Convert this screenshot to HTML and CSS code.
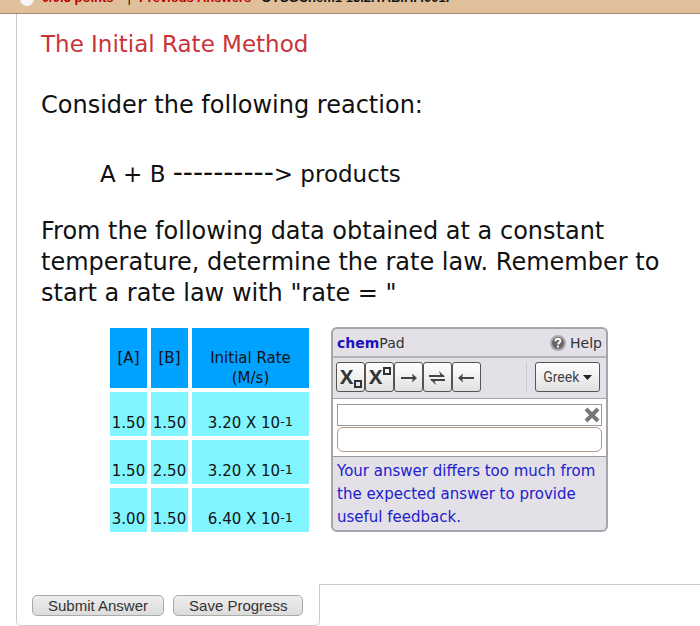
FILE: index.html
```html
<!DOCTYPE html>
<html lang="en">
<head>
  <meta charset="UTF-8" />
  <meta name="viewport" content="width=device-width, initial-scale=1.0"/>
  <title>The Initial Rate Method</title>
  <link rel="stylesheet" href="styles.css">
</head>
<body>

  <header class="question-bar">
    <span class="status-dot"></span>
    <span class="points">0/0.5 points</span>
    <span class="divider">|</span>
    <a class="previous" href="#">Previous Answers</a>
    <span class="code">OYSGChem1 15.2.TAB.HP.001.</span>
  </header>

  <main class="question">
    <h1>The Initial Rate Method</h1>
    <p class="intro">Consider the following reaction:</p>
    <p class="reaction">A + B <span class="dashes">----------</span>&gt; products</p>
    <p class="task">From the following data obtained at a constant temperature, determine the rate law. Remember to start a rate law with "rate = "</p>

    <div class="work">
      <table class="rates">
        <thead>
          <tr><th>[A]</th><th>[B]</th><th class="rate">Initial Rate (M/s)</th></tr>
        </thead>
        <tbody>
          <tr><td>1.50</td><td>1.50</td><td>3.20 X 10<sup>-1</sup></td></tr>
          <tr><td>1.50</td><td>2.50</td><td>3.20 X 10<sup>-1</sup></td></tr>
          <tr><td>3.00</td><td>1.50</td><td>6.40 X 10<sup>-1</sup></td></tr>
        </tbody>
      </table>

      <section class="chempad">
        <div class="pad-header">
          <span><b>chem</b>Pad</span>
          <a class="help" href="#">
            <svg width="16" height="16" viewBox="0 0 16 16">
              <circle cx="8" cy="8" r="7" fill="#666" stroke="#aaa" stroke-width="2"/>
              <path d="M5.5 6.2C5.5 3 10.6 3.2 10.4 6C10.3 7.7 8.1 7.5 8.1 9.4" fill="none" stroke="#fff" stroke-width="2"/>
              <rect x="7" y="10.6" width="2" height="2" fill="#fff"/>
            </svg>
            Help
          </a>
        </div>

        <div class="toolbar">
          <div class="tools">
            <button type="button" aria-label="Subscript">
              <svg width="27" height="28" viewBox="0 0 27 28">
                <text class="tool-letter" x="3" y="21">X</text>
                <rect x="18" y="18" width="6" height="6" fill="none" stroke="#333" stroke-width="2"/>
              </svg>
            </button>
            <button type="button" aria-label="Superscript">
              <svg width="27" height="28" viewBox="0 0 27 28">
                <text class="tool-letter" x="3" y="21">X</text>
                <rect x="18" y="5" width="6" height="6" fill="none" stroke="#333" stroke-width="2"/>
              </svg>
            </button>
            <button type="button" aria-label="Right arrow">
              <svg width="27" height="28" viewBox="0 0 27 28" fill="none" stroke="#444">
                <path d="M6 15H20" stroke-width="2"/>
                <path d="M17 10.5L22 15L17 19.5L18 15Z" fill="#444" stroke="none"/>
              </svg>
            </button>
            <button type="button" aria-label="Equilibrium arrows">
              <svg width="27" height="28" viewBox="0 0 27 28" fill="none" stroke="#444">
                <path d="M5 13H20M7 17H21" stroke-width="2"/>
                <path d="M15 8L21 14H17ZM12 22L6 16H10Z" fill="#444" stroke="none"/>
              </svg>
            </button>
            <button type="button" aria-label="Left arrow">
              <svg width="27" height="28" viewBox="0 0 27 28" fill="none" stroke="#444">
                <path d="M7 15H21" stroke-width="2"/>
                <path d="M10 10.5L5 15L10 19.5L9 15Z" fill="#444" stroke="none"/>
              </svg>
            </button>
          </div>
          <div class="greek">
            <button type="button">Greek
              <svg width="9" height="10" viewBox="0 0 9 10"><path d="M0 3H9L4.5 8Z" fill="#222"/></svg>
            </button>
          </div>
        </div>

        <div class="answer">
          <div class="answer-row">
            <input class="entry" type="text" aria-label="Answer">
            <svg class="wrong" width="16" height="16" viewBox="0 0 16 16">
              <path d="M2 2L14 14M14 2L2 14" stroke="#777" stroke-width="4"/>
            </svg>
          </div>
          <input class="preview" type="text" aria-label="Preview" readonly>
        </div>

        <p class="feedback">Your answer differs too much from the expected answer to provide useful feedback.</p>
      </section>
    </div>
  </main>

  <footer class="actions">
    <div class="action-tab">
      <button type="submit">Submit Answer</button>
      <button type="button">Save Progress</button>
    </div>
    <div class="action-rest"></div>
  </footer>

</body>
</html>
```
FILE: styles.css
```css
* {
  box-sizing: border-box;
}

body {
  margin: 0;
  background: #fff;
  color: #111;
  font-family: Verdana, 'DejaVu Sans', sans-serif;
}

.question-bar {
  display: flex;
  align-items: flex-end;
  height: 14px;
  padding: 0 20px 7px;
  background: #e0c09a;
  border-bottom: 1px solid #a58a6c;
  font: bold 13px/16px 'Liberation Sans', Arial, sans-serif;
  white-space: nowrap;
}

.status-dot {
  width: 14px;
  height: 14px;
  margin-right: 8px;
  border-radius: 50%;
  background: #f4f4f4;
}

.points,
.previous {
  color: #b00;
  text-decoration: none;
}

.divider {
  margin: 0 8px 0 14px;
  font-weight: normal;
}

.code {
  margin-left: 10px;
}

.question {
  margin-left: 16px;
  padding: 15px 24px 48px;
  border-left: 1px solid #ccc;
}

h1,
.question p {
  margin: 0;
  font-size: 24px;
  font-weight: normal;
  line-height: 31px;
}

h1 {
  color: #c9343a;
  font-size: 23px;
}

.question .intro {
  margin-top: 30px;
}

.question .reaction {
  margin: 38px 0 26px;
  padding-left: 59px;
  font-size: 23px;
}

.dashes {
  font-size: 28px;
  line-height: 1px;
}

.work {
  display: flex;
  align-items: flex-start;
  gap: 18px;
  margin-top: 15px;
  padding-left: 65px;
}

.rates {
  border-spacing: 4px;
  table-layout: fixed;
  width: 207px;
  font-size: 15px;
  line-height: 20px;
}

.rates th,
.rates td {
  width: 37px;
  padding: 0;
  text-align: center;
  font-weight: normal;
  white-space: nowrap;
}

.rates th {
  height: 60px;
  padding-top: 20px;
  background: #00a2ff;
  vertical-align: top;
}

.rates .rate {
  width: 117px;
  padding-left: 16px;
  padding-right: 16px;
  white-space: normal;
}

.rates td {
  height: 44px;
  padding-top: 18px;
  background: #80f5ff;
}

.rates sup {
  font-size: 13px;
  line-height: 0;
  vertical-align: 2px;
}

.chempad {
  width: 277px;
  margin-top: 3px;
  border: 2px solid #a5a5aa;
  border-radius: 6px;
  background: #e3e1e7;
  overflow: hidden;
}

.pad-header {
  display: flex;
  justify-content: space-between;
  align-items: center;
  height: 27px;
  padding: 0 4px;
  font-size: 14px;
  color: #333;
}

.pad-header b {
  color: #2211bb;
}

.help {
  display: flex;
  align-items: center;
  gap: 4px;
  color: #333;
  text-decoration: none;
}

.toolbar {
  display: flex;
  justify-content: space-between;
  padding: 4px 6px 6px 3px;
  border-top: 2px solid #b5b3b9;
  border-bottom: 1px solid #a5a5aa;
}

.tools {
  display: flex;
}

.toolbar button {
  height: 30px;
  padding: 0;
  border: 1px solid #555;
  border-radius: 3px;
  background: linear-gradient(#fff, #e0e0e0);
  color: #444;
}

.tools button {
  width: 29px;
}

.tools svg {
  display: block;
}

.tool-letter {
  fill: #333;
  font: bold 20px 'Open Sans', sans-serif;
}

.greek {
  padding-left: 8px;
  border-left: 1px solid #ccc;
}

.greek button {
  width: 65px;
  font: 14px 'Roboto', sans-serif;
}

.answer {
  padding: 5px 4px 4px;
  background: #fff;
  border-bottom: 1px solid #999;
}

.answer-row {
  display: flex;
  align-items: center;
  height: 22px;
  padding-right: 1px;
  border: 1px solid #999;
}

.entry {
  flex: 1;
  min-width: 0;
  height: 18px;
  border: 0;
}

.preview {
  display: block;
  width: 100%;
  height: 25px;
  margin-top: 1px;
  border: 1px solid #b39a85;
  border-radius: 6px;
}

.question .feedback {
  padding: 3px 4px 1px;
  color: #2020cc;
  font-size: 15px;
  line-height: 23px;
}

.actions {
  display: flex;
  margin-left: 16px;
}

.action-tab {
  display: flex;
  gap: 9px;
  padding: 11px 16px 9px 15px;
  border: solid #ccc;
  border-width: 0 1px 1px;
  border-radius: 0 0 5px 5px;
}

.action-rest {
  flex: 1;
  border-top: 1px solid #ccc;
}

.action-tab button {
  height: 21px;
  padding: 0 15px;
  border: 1px solid #aaa;
  border-radius: 5px;
  background: linear-gradient(#eee, #dcdcdc);
  color: #333;
  font: 15px 'Liberation Sans', Arial, sans-serif;
}
```
